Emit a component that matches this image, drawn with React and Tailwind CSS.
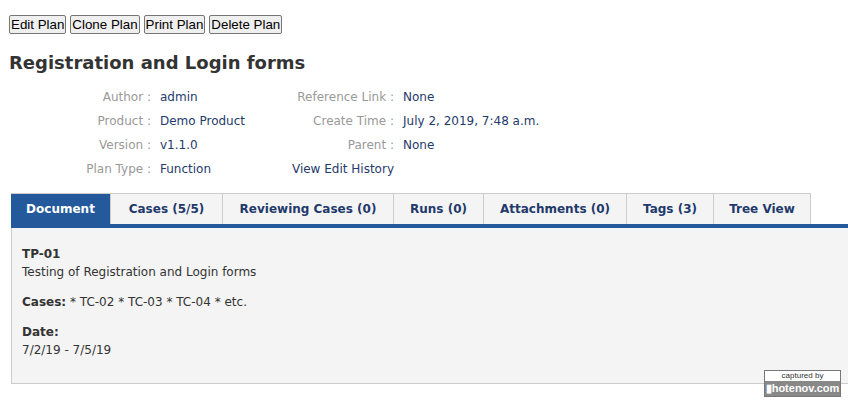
import React from 'react';

const meta = [
  ['Author', 'admin', 'Reference Link', 'None'],
  ['Product', 'Demo Product', 'Create Time', 'July 2, 2019, 7:48 a.m.'],
  ['Version', 'v1.1.0', 'Parent', 'None'],
  ['Plan Type', 'Function', null, null],
];

const tabs = [
  ['Document', 'w-[99px]'],
  ['Cases (5/5)', 'w-[112px]'],
  ['Reviewing Cases (0)', 'w-[171px]'],
  ['Runs (0)', 'w-[90px]'],
  ['Attachments (0)', 'w-[143px]'],
  ['Tags (3)', 'w-[87px]'],
  ['Tree View', 'w-[98px]'],
];

const App = () => {
  return (
    <div className="relative min-h-[405px] bg-white pl-[9px] pt-[15px] text-[12px] text-[#333] [font-family:'DejaVu_Sans',Verdana,sans-serif]">
      {/* Action buttons */}
      <div className="flex gap-[4px]">
        {['Edit Plan', 'Clone Plan', 'Print Plan', 'Delete Plan'].map((b) => (
          <button
            key={b}
            className="h-[19px] rounded-[2px] border border-[#767676] bg-[#efefef] px-[1px] text-[13.33px] leading-[17px] text-black [font-family:'Liberation_Sans',Arial,sans-serif]"
          >
            {b}
          </button>
        ))}
      </div>

      <h1 className="mt-[16px] text-[18px] font-bold leading-[26px] text-[#333]">Registration and Login forms</h1>

      {/* Plan meta */}
      <div className="mt-[9px] grid grid-cols-[142px_101px_124px_1fr] gap-x-[9px] leading-[24px]">
        {meta.map(([l1, v1, l2, v2]) => (
          <React.Fragment key={l1}>
            <div className="text-right text-[#999]">{l1} :</div>
            <div className="text-[#1f3a6b]">{v1}</div>
            {l2 ? (
              <div className="text-right text-[#999]">{l2} :</div>
            ) : (
              <div className="text-right text-[#1f3a6b]">View Edit History</div>
            )}
            <div className="text-[#1f3a6b]">{v2}</div>
          </React.Fragment>
        ))}
      </div>

      {/* Tabs */}
      <div className="ml-[2px] mt-[12px]">
        <div className="flex">
          <div className="flex border-t border-[#ccc]">
            {tabs.map(([t, w], i) => (
              <div
                key={t}
                className={
                  i === 0
                    ? `${w} h-[30px] bg-[#245a9c] text-center font-bold leading-[30px] text-white`
                    : `${w} h-[30px] border-l border-[#ccc] bg-[#f4f4f4] text-center font-bold leading-[30px] text-[#1f3a6b] last:border-r`
                }
              >
                {t}
              </div>
            ))}
          </div>
        </div>
        <div className="h-[4px] bg-[#245a9c]" />
        <div className="border-b border-l border-[#ccc] bg-[#f4f4f4] px-[10px] pb-[24px] pt-[17px] text-[12px] leading-[18px]">
          <div className="font-bold">TP-01</div>
          <div>Testing of Registration and Login forms</div>
          <div className="mt-[12px]">
            <span className="font-bold">Cases:</span> * TC-02 * TC-03 * TC-04 * etc.
          </div>
          <div className="mt-[12px] font-bold">Date:</div>
          <div>7/2/19 - 7/5/19</div>
        </div>
      </div>

      {/* capture watermark */}
      <div className="absolute left-[764px] top-[370px] w-[77px] border border-[#777] bg-white text-center [font-family:'Liberation_Sans',Arial,sans-serif]">
        <div className="text-[8px] leading-[10px] text-[#333]">captured by</div>
        <div className="bg-[#888] text-[11px] font-bold leading-[15px] text-white">▮hotenov.com</div>
      </div>
    </div>
  );
};

export default App;
